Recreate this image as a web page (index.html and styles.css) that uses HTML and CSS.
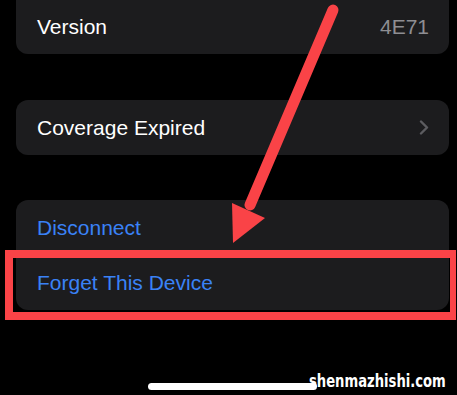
FILE: index.html
```html
<!DOCTYPE html>
<html>
<head>
<meta charset="utf-8">
<link rel="stylesheet" href="styles.css">
</head>
<body>
<div class="screen">
  <div class="group group-top">
    <div class="row">
      <span class="label">Version</span>
      <span class="value">4E71</span>
    </div>
  </div>
  <div class="group">
    <div class="row">
      <span class="label">Coverage Expired</span>
      <svg class="chev" width="10" height="15" viewBox="0 0 10 15"><path d="M2 1.5 L8 7.5 L2 13.5" fill="none" stroke="#5c5c60" stroke-width="2.4" stroke-linecap="round" stroke-linejoin="round"/></svg>
    </div>
  </div>
  <div class="group">
    <div class="row"><span class="action">Disconnect</span></div>
    <div class="sep"></div>
    <div class="row"><span class="action">Forget This Device</span></div>
  </div>
  <div class="bottom">
    <div class="home"></div>
    <div class="mark">shenmazhishi.com</div>
  </div>
  <div class="highlight"></div>
  <svg class="arrow" width="457" height="395" viewBox="0 0 457 395">
    <line x1="333" y1="10" x2="250" y2="205" stroke="#fa4347" stroke-width="11" stroke-linecap="round"/>
    <polygon points="232,203 265,218 233,243" fill="#fa4347"/>
  </svg>
</div>
</body>
</html>
```
FILE: styles.css
```css
html, body {
  margin: 0;
  padding: 0;
  background: #000;
}
.screen {
  position: relative;
  width: 457px;
  height: 395px;
  overflow: hidden;
  padding: 0 8px 0 16px;
  box-sizing: border-box;
  display: flex;
  flex-direction: column;
  font-family: "Liberation Sans", Arial, sans-serif;
}
.group {
  background: #1c1c1e;
  border-radius: 12px;
  margin-top: 46px;
  display: flex;
  flex-direction: column;
}
.group + .group + .group {
  margin-top: 45px;
}
.group-top {
  margin-top: 0;
  border-radius: 0 0 12px 12px;
}
.row {
  height: 55px;
  display: flex;
  align-items: center;
  justify-content: space-between;
  padding: 0 20px 0 21px;
  font-size: 21px;
}
.group-top .row {
  height: 54px;
}
.sep {
  height: 0;
}
.label {
  color: #fff;
}
.value {
  color: #8e8e93;
}
.chev {
  display: block;
}
.action {
  color: #3a82f6;
}
.bottom {
  margin-top: auto;
  height: 22px;
  display: flex;
  align-items: flex-start;
  position: relative;
}
.home {
  margin-top: 10px;
  margin-left: 132px;
  width: 169px;
  height: 7px;
  border-radius: 4px;
  background: #fff;
}
.mark {
  position: absolute;
  left: 293px;
  top: 0;
  color: #fff;
  font-family: "DejaVu Sans", sans-serif;
  font-weight: bold;
  font-stretch: condensed;
  font-size: 17px;
  line-height: 16px;
  white-space: nowrap;
  transform: scaleX(0.86);
  transform-origin: left top;
}
.highlight {
  position: absolute;
  left: 5px;
  top: 250px;
  width: 451px;
  height: 70px;
  box-sizing: border-box;
  border: 8px solid #fa4347;
  border-right-width: 6px;
}
.arrow {
  position: absolute;
  left: 0;
  top: 0;
}
```
